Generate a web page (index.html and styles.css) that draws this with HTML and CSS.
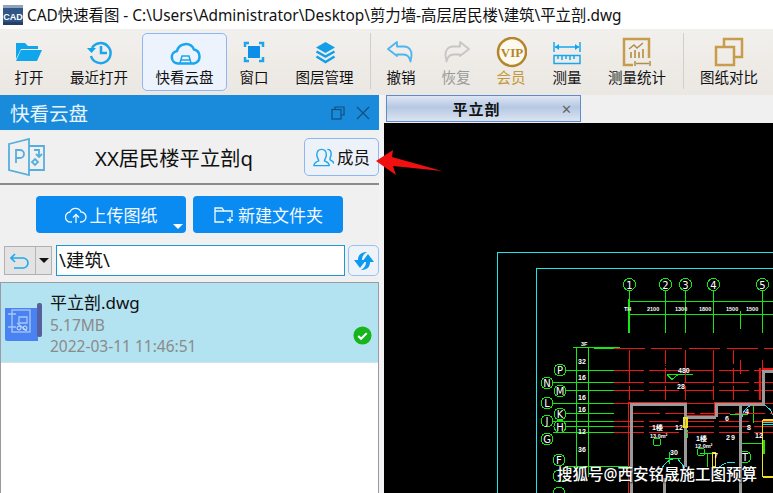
FILE: index.html
```html
<!DOCTYPE html>
<html lang="zh">
<head>
<meta charset="utf-8">
<title>CAD快速看图</title>
<link rel="stylesheet" href="styles.css">
</head>
<body>
<div class="app">
  <header class="titlebar">
    <svg class="app-logo" viewBox="0 0 22 22"><rect x="1" y="1" width="20" height="20" fill="#2f5686"/><rect x="1" y="1" width="20" height="3" fill="#8fa3bb"/><rect x="1" y="18" width="20" height="3" fill="#26405f"/><text x="11" y="16" class="logo-text">CAD</text></svg>
    <span class="title-text">CAD快速看图 - C:\Users\Administrator\Desktop\剪力墙-高层居民楼\建筑\平立剖.dwg</span>
  </header>

  <nav class="toolbar">
    <div class="tool w58">
      <svg class="tool-icon" viewBox="0 0 32 32"><path class="f-blue" d="M3 6h9l3 3h10v3H8l-5 10z"/><path class="f-blue" d="M8 13h21l-5 11H3z"/></svg>
      <span>打开</span>
    </div>
    <div class="tool w82">
      <svg class="tool-icon" viewBox="0 0 32 32"><path class="s-blue" d="M9 11a10 10 0 1 1-1 8"/><path class="f-blue" d="M4 11h9l-4.500 5z"/><path class="s-blue" d="M18 9v7h6"/></svg>
      <span>最近打开</span>
    </div>
    <div class="tool active">
      <svg class="tool-icon" viewBox="0 0 32 32"><path class="s-blue" d="M9 26.500a6.300 6.300 0 0 1-1-12.500a9 9 0 0 1 17-1.500a7.200 7.200 0 0 1 0 14z"/><path class="s-thin" d="M11 26l2-7h7l2 7M12 23h9"/></svg>
      <span>快看云盘</span>
    </div>
    <div class="tool w54">
      <svg class="tool-icon" viewBox="0 0 32 32"><path class="s-blue" d="M7 10V6h4M21 6h4v4M25 20v4h-4M11 24H7v-4"/><rect class="f-deep" x="10" y="9" width="12" height="12"/></svg>
      <span>窗口</span>
    </div>
    <div class="tool w87">
      <svg class="tool-icon" viewBox="0 0 32 32"><path class="f-layer" d="M16.500 5l9.500 5.500-9.500 5.500-9.500-5.500z"/><path class="s-layer" d="M7.500 14.500l9 5 9-5M7.500 19.500l9 5.500 9-5.500"/></svg>
      <span>图层管理</span>
    </div>
    <div class="sep"></div>
    <div class="tool w60">
      <svg class="tool-icon" viewBox="0 0 32 32"><path class="s-undo" d="M3 12l9-7v4.500h7c5 0 8 4 7.500 9l-1 6c-1-5-3-7-7-7h-6.500V19z"/></svg>
      <span>撤销</span>
    </div>
    <div class="tool w50 disabled">
      <svg class="tool-icon" viewBox="0 0 32 32"><path class="s-redo" d="M29 12l-9-7v4.500h-7c-5 0-8 4-7.500 9l1 6c1-5 3-7 7-7h6.500V19z"/></svg>
      <span>恢复</span>
    </div>
    <div class="tool w60 gold">
      <svg class="tool-icon" viewBox="0 0 32 32"><circle class="s-vip" cx="17" cy="15" r="14"/><text x="17" y="19.500" class="vip-text">VIP</text></svg>
      <span>会员</span>
    </div>
    <div class="tool w52">
      <svg class="tool-icon" viewBox="0 0 32 32"><path class="s-thin" d="M3 5v10M29 5v10M4 10h24"/><path class="f-blue" d="M4 10l4-3v6zM28 10l-4-3v6z"/><rect class="s-thin" x="3" y="18.500" width="26" height="8"/><path class="s-thin" d="M7 19v3M11 19v4M15 19v3M19 19v4M23 19v3"/></svg>
      <span>测量</span>
    </div>
    <div class="tool w88">
      <svg class="tool-icon" viewBox="0 0 32 32"><path class="s-gold" d="M12 28H3V2h25v19"/><path class="s-gold-thin" d="M8 12l5-4 3 3 6-5"/><path class="f-gold" d="M9 15h2v6H9zM13 13h2v8h-2zM17 15h2v6h-2zM21 12h2v9h-2z"/><path class="s-gold-thin" d="M14 24v5M29 24v5M15 26.500h13"/></svg>
      <span>测量统计</span>
    </div>
    <div class="sep gap2"></div>
    <div class="tool w90">
      <svg class="tool-icon" viewBox="0 0 32 32"><path class="s-gold" d="M11 10V2h18v18h-8"/><rect class="s-gold" x="3" y="10" width="18" height="18"/></svg>
      <span>图纸对比</span>
    </div>
  </nav>

  <main class="main">
    <aside class="panel">
      <div class="panel-head">
        <span class="panel-title">快看云盘</span>
        <svg class="head-icon" viewBox="0 0 14 14"><path class="s-dark" d="M4 3V1h9v8h-3"/><rect class="s-dark" x="1" y="3.500" width="9" height="9.500"/></svg>
        <svg class="head-icon close-icon" viewBox="0 0 14 14"><path class="s-dark" d="M1 1l12 12M13 1L1 13"/></svg>
      </div>

      <div class="project">
        <svg class="ppt-icon" viewBox="0 0 37 38"><path class="s-ppt" d="M1 6l20-5v36L1 32z"/><path class="s-ppt" d="M21 8h15v24H21"/><path class="s-ppt" d="M8 25V12h4a3.500 3.500 0 0 1 0 8H8"/><path class="s-ppt" d="M26 12h5v6M28 16l3 3 3-3"/><path class="s-ppt" d="M27 21l3 3-3 3-3-3z"/></svg>
        <span class="project-name">XX居民楼平立剖q</span>
        <button class="member">
          <svg class="member-icon" viewBox="0 0 22 20"><path class="s-member" d="M11 19H1c0-3 2-4 5-5 0-2-2-3-2-6 0-4 2-6 5-6 4 0 5 3 5 6 0 3-2 4-2 6 2 1 5 2 5 5z"/><path class="s-member" d="M15 2c3 0 4 3 4 5 0 3-2 4-1 6 2 1 4 2 4 4"/></svg>
          <span>成员</span>
        </button>
      </div>

      <div class="actions">
        <button class="primary">
          <svg class="btn-icon" viewBox="0 0 22 18"><path class="s-white" d="M7 16H6a5 5 0 0 1-1-10a6 6 0 0 1 11 0a5 5 0 0 1 0 10h-1"/><path class="s-white" d="M11 17V9M8 11.500L11 8.500l3 3"/></svg>
          <span>上传图纸</span>
          <i class="caret-white"></i>
        </button>
        <button class="primary">
          <svg class="btn-icon" viewBox="0 0 22 18"><path class="s-white" d="M11 16H2V2h7l2 3h8v6"/><path class="s-white" d="M2 5h9M17 11v6M14 14h6"/></svg>
          <span>新建文件夹</span>
        </button>
      </div>

      <div class="path-row">
        <div class="back">
          <span class="back-main"><svg class="back-icon" viewBox="0 0 20 16"><path class="s-back" d="M5 1L1 5l4 4M1 5h12a4.500 4.500 0 0 1 0 10H4"/></svg></span>
          <span class="back-more"><i class="caret-black"></i></span>
        </div>
        <div class="path-input">\建筑\</div>
        <button class="refresh">
          <svg class="refresh-icon" viewBox="0 0 24 24"><path class="f-refresh" d="M15 3c-5 0-9 2-9 8H2l6 8 6-8h-4c0-4 2-6 5-8z"/><path class="f-refresh" d="M9 21c5 0 9-2 9-8h4l-6-8-6 8h4c0 4-2 6-5 8z"/></svg>
        </button>
      </div>

      <div class="list">
        <div class="file selected">
          <svg class="file-icon" viewBox="0 0 38 38"><path class="f-plan" d="M0 5h33v33H2a2 2 0 0 1-2-2z"/><rect class="f-roll" x="32" y="0" width="5" height="34" rx="2"/><g class="plan-lines"><rect x="7" y="7" width="18" height="22"/><path d="M3 11h8M3 24h8M14 14h8v6h-8zM12 20l10 8"/></g><circle class="plan-dot" cx="14" cy="25" r="2"/><circle class="plan-dot" cx="20" cy="25" r="2"/></svg>
          <div class="file-meta">
            <div class="file-name">平立剖.dwg</div>
            <div class="file-sub">5.17MB</div>
            <div class="file-sub">2022-03-11 11:46:51</div>
          </div>
          <svg class="check" viewBox="0 0 20 20"><circle class="f-check" cx="10" cy="10" r="9.500"/><path class="s-check" d="M5.500 10.500l3 3 6-6"/></svg>
        </div>
      </div>
    </aside>

    <section class="viewer">
      <div class="tabs">
        <div class="tab"><span class="tab-name">平立剖</span><span class="tab-x">✕</span></div>
      </div>
      <div class="canvas">
        <svg class="drawing" viewBox="384 123 389 370">
          <g class="cyan">
            <path d="M497.500 493V252.500H773M536.500 493V268.500H773"/>
            <path d="M763 422h10M763 424h10"/>
            <path d="M715 476a16 16 0 0 1 20-13M742 417a16 16 0 0 1 31-2M685 468l-8-10a20 20 0 0 0-16 12"/>
          </g>
          <g class="green">
            <circle cx="629.500" cy="284.500" r="6"/><circle cx="665.500" cy="284.500" r="6"/><circle cx="685.500" cy="284.500" r="6"/><circle cx="713.500" cy="284.500" r="6"/><circle cx="762.500" cy="284.500" r="6"/>
            <path d="M629.500 290v43M665.500 290v43M685.500 290v43M713.500 290v43M740.500 311v18M762.500 290v43"/>
            <path d="M628 301.500h145M628 314.500h145"/>
            <path d="M573 347.500h47M576.500 347v130M588.500 347v130"/>
            <circle cx="560" cy="370" r="6"/><circle cx="547" cy="383" r="6"/><circle cx="560" cy="391" r="6"/><circle cx="547" cy="403" r="6"/><circle cx="560" cy="414" r="6"/><circle cx="547" cy="421" r="6"/><circle cx="560" cy="426.500" r="6"/><circle cx="547" cy="439" r="6"/><circle cx="559" cy="460" r="6"/><circle cx="559" cy="476" r="6"/><circle cx="559" cy="493" r="6"/>
            <path d="M566 370.500h48M553 382.500h61M566 390.500h48M553 403.500h61M566 413.500h48M553 421.500h61M566 426.500h48M553 432.500h61M565 466.500h65"/>
            <path d="M667 374.500h26M667 374.500l5 5 6-5M730 414.500h18M753 405v18M740 443h23M740 436v14M665 458h16M669 452v12M707 453v14M700 453h12"/>
            <circle cx="745" cy="457" r="6"/><circle cx="657" cy="442" r="4"/><circle cx="701" cy="452" r="4"/>
            <path d="M685 430v8M687 430v8"/>
          </g>
          <path class="green-thick" d="M616 348h-22M764 440v14M629 299v34"/>
          <g class="red">
            <path d="M614 348.500h31M651 348.500h31M689 348.500h31M727 348.500h31M764 348.500h9"/>
            <path d="M629.500 360v14M665.500 360v2M665.500 365v1M685.500 360v14M713.500 360v14M740.500 360v14M762.500 360v14"/>
            <path stroke-dasharray="30 5" d="M614 370.500h148M614 382.500h159M614 390.500h159M614 403.500h159M630 413.500h143M614 421.500h159M614 426.500h159M614 432.500h159"/>
            <path stroke-dasharray="14 4" d="M629.500 350v54M665.500 350v54M685.500 350v54M713.500 350v54M733.500 350v54"/>
          </g>
          <path class="red-thick" d="M628.500 493V402.500H686.500M684 415.500h30M714.500 416V402.500H762.500V369H773M760 400v-32"/>
          <g class="wall">
            <path d="M631.500 493V404.500H685.500V467M686 417.500h30M716.500 417V404.500H763.500V371H773M740.500 405V493M664 493V478"/>
          </g>
          <path class="yellow" d="M684 418h3v9h-3zM712.500 453v14h3v-14zM762.500 420v57M762.500 420h10M762.500 477h10"/>
          <g class="dim">
            <text x="624" y="311">TH</text><text x="647" y="311">2100</text><text x="675" y="311">1300</text><text x="699" y="311">1800</text><text x="726" y="311">1500</text><text x="746" y="311">1500</text>
            <text x="581" y="346">3F</text><text x="578" y="364" class="big">32</text><text x="578" y="380" class="big">16</text><text x="578" y="400" class="big">16</text><text x="578" y="412" class="big">16</text><text x="578" y="434" class="big">12</text><text x="578" y="452" class="big">36</text>
            <text x="652" y="430" class="big">1楼</text><text x="650" y="438">13.0m²</text><text x="696" y="441" class="big">1楼</text><text x="695" y="448">12.0m²</text>
            <text x="678" y="373" class="big">480</text><text x="677" y="389" class="big">28</text><text x="675" y="430" class="big">12</text><text x="670" y="455" class="big">30</text><text x="755" y="438" class="big">12</text>
            <text x="745" y="414" class="big">4</text><text x="725" y="421" class="big">6</text><text x="747" y="430" class="big">8</text><text x="714" y="458" class="big">7</text><text x="731" y="440" class="big">9</text><text x="726" y="440" class="big">2</text>
          </g>
          <g class="labels">
            <text x="629.500" y="288.500">1</text><text x="665.500" y="288.500">2</text><text x="685.500" y="288.500">3</text><text x="713.500" y="288.500">4</text><text x="762.500" y="288.500">5</text>
            <text x="560" y="374">P</text><text x="547" y="387">N</text><text x="560" y="395">M</text><text x="547" y="407">L</text><text x="560" y="418">K</text><text x="547" y="425">J</text><text x="560" y="430.500">H</text><text x="547" y="443">G</text><text x="559" y="464">F</text><text x="745" y="461">T</text>
          </g>
        </svg>
        <span class="watermark">搜狐号@西安铭晟施工图预算</span>
      </div>
    </section>
  </main>

  <svg class="arrow" viewBox="0 0 70 30"><path class="f-arrow" d="M1 12L18 1l-1 7 50 14-49-5 3 9z"/></svg>
</div>
</body>
</html>
```

FILE: styles.css
```css
* { box-sizing: border-box; }
html, body { margin: 0; padding: 0; height: 100%; overflow: hidden; background: #fff; }
body { font-family: "Noto Sans", "Noto Sans CJK SC", sans-serif; color: #111; }
button { font: inherit; margin: 0; padding: 0; }

.app { position: relative; width: 773px; height: 493px; display: flex; flex-direction: column; overflow: hidden; }

.titlebar { height: 29px; flex: none; display: flex; align-items: center; padding-left: 2px; gap: 3px; background: #fff; }
.app-logo { width: 22px; height: 22px; flex: none; }
.logo-text { font: bold 9px "Liberation Sans", sans-serif; fill: #fff; text-anchor: middle; }
.title-text { font-size: 15.400px; white-space: nowrap; color: #111; }

.toolbar { height: 66px; flex: none; display: flex; align-items: flex-start; padding-top: 4px; background: linear-gradient(#f2f0ed, #ebe7e2); }
.tool { height: 58px; flex: none; display: flex; flex-direction: column; align-items: center; padding-top: 4px; font-size: 14.500px; line-height: 17px; white-space: nowrap; }
.tool-icon { width: 32px; height: 32px; flex: none; }
.w50 { width: 50px; } .w52 { width: 52px; } .w54 { width: 54px; } .w58 { width: 58px; } .w60 { width: 60px; }
.w82 { width: 82px; margin-right: 2px; } .w87 { width: 87px; } .w88 { width: 88px; } .w90 { width: 90px; }
.active { width: 85px; background: #edf3fd; border: 1px solid #8db6f2; border-radius: 5px; padding-top: 3px; }
.disabled { color: #9a9a9a; }
.gold { color: #c4993d; }
.sep { width: 1px; height: 56px; margin: 0 0 0 2px; background: #d2cfca; flex: none; }

.f-blue { fill: #0fa6ee; }
.f-deep { fill: #0c8fe8; }
.f-layer { fill: #129fe8; }
.s-layer { fill: none; stroke: #129fe8; stroke-width: 2.500; }
.s-blue { fill: none; stroke: #1aa6ee; stroke-width: 2.500; }
.s-thin { fill: none; stroke: #1aa6ee; stroke-width: 1.500; }
.s-undo { fill: none; stroke: #4db6ee; stroke-width: 1.800; stroke-linejoin: round; }
.s-redo { fill: none; stroke: #c6c6c6; stroke-width: 1.800; stroke-linejoin: round; }
.s-vip { fill: #fdf9ee; stroke: #b4862c; stroke-width: 2.500; }
.vip-text { font: bold 13px "Liberation Serif", serif; fill: #b4862c; text-anchor: middle; }
.s-gold { fill: none; stroke: #c79c4c; stroke-width: 2.500; }
.s-gold-thin { fill: none; stroke: #b18d45; stroke-width: 1.500; }
.f-gold { fill: #c2a160; }

.main { flex: 1; display: flex; min-height: 0; background: #f3f3f3; }

.panel { width: 379px; flex: none; display: flex; flex-direction: column; background: #f0f0f0; }
.panel-head { height: 35px; flex: none; display: flex; align-items: center; padding: 0 9px 0 10px; background: #1a8bdb; }
.panel-title { font-size: 19.500px; color: #e8f4fd; margin-right: auto; }
.head-icon { width: 14px; height: 14px; }
.close-icon { margin-left: 11px; }
.s-dark { fill: none; stroke: #0f4f80; stroke-width: 1.200; }

.project { height: 55px; flex: none; display: flex; align-items: center; padding-left: 8px; border-bottom: 2px solid #8a8a8a; }
.ppt-icon { width: 37px; height: 38px; flex: none; }
.s-ppt { fill: none; stroke: #55aedd; stroke-width: 1.800; }
.project-name { margin-left: 50px; font-size: 20.300px; color: #111; white-space: nowrap; }
.member { margin-left: auto; width: 75px; height: 38px; display: flex; align-items: center; justify-content: center; gap: 3px; background: #edf2f9; border: 1px solid #8db6f2; border-radius: 5px; font-size: 16.500px; color: #111; }
.member-icon { width: 21px; height: 20px; }
.s-member { fill: none; stroke: #1fa4ee; stroke-width: 1.500; }

.actions { flex: none; display: flex; gap: 7px; padding: 11px 0 0 36px; }
.primary { position: relative; width: 150px; height: 37px; display: flex; align-items: center; justify-content: center; gap: 3px; background: #0a8bf2; border: 0; border-radius: 4px; color: #f4faff; font-size: 17px; }
.btn-icon { width: 22px; height: 18px; }
.s-white { fill: none; stroke: #f4faff; stroke-width: 1.300; }
.caret-white { position: absolute; right: 3px; bottom: 4px; width: 0; height: 0; border: 5px solid transparent; border-top: 5px solid #fff; border-bottom: 0; }

.path-row { flex: none; display: flex; align-items: center; margin-top: 12px; height: 31px; padding-left: 4px; }
.back { width: 48px; height: 29px; display: flex; border: 1px solid #b0b0b0; background: #e3e3e3; }
.back-main { flex: 1; display: flex; align-items: center; justify-content: center; border-right: 1px solid #b5b5b5; }
.back-more { width: 15px; display: flex; align-items: center; justify-content: center; }
.back-icon { width: 20px; height: 16px; }
.s-back { fill: none; stroke: #1fa8ee; stroke-width: 1.600; }
.caret-black { width: 0; height: 0; border: 5px solid transparent; border-top: 5px solid #111; border-bottom: 0; }
.path-input { width: 289px; height: 31px; margin-left: 4px; padding-left: 2px; background: #fff; border: 1px solid #1a98d8; font-size: 18.500px; line-height: 28px; color: #111; }
.refresh { width: 31px; height: 31px; margin-left: 3px; display: flex; align-items: center; justify-content: center; background: #eef3fa; border: 1px solid #9cc0f0; border-radius: 5px; }
.refresh-icon { width: 24px; height: 24px; }
.f-refresh { fill: #0c9bf0; }

.list { flex: 1; min-height: 0; margin-top: 6px; background: #fff; border: 1px solid #9a9aa4; border-bottom: 0; }
.file { height: 80px; display: flex; align-items: flex-start; border-bottom: 1px solid #d5e3e8; }
.selected { background: #b3e2f0; }
.file-icon { width: 38px; height: 38px; flex: none; margin: 20px 7px 0 4px; }
.f-plan { fill: #4a82f2; }
.f-roll { fill: #56609e; }
.plan-lines { fill: none; stroke: #a8c8f8; stroke-width: 1.300; }
.plan-dot { fill: none; stroke: #d0e4ff; stroke-width: 1; }
.file-meta { flex: 1; padding-top: 7px; }
.file-name { font-size: 17px; line-height: 25px; color: #111; }
.file-sub { font-size: 15.500px; line-height: 21px; color: #8a8a8a; }
.check { width: 19px; height: 19px; margin: 43px 6px 0 0; flex: none; }
.f-check { fill: #17b51c; }
.s-check { fill: none; stroke: #fff; stroke-width: 2.200; }

.viewer { flex: 1; min-width: 0; display: flex; flex-direction: column; margin-left: 5px; }
.tabs { height: 28px; flex: none; padding-left: 2px; background: #f0f0f0; }
.tab { position: relative; width: 195px; height: 27px; display: flex; align-items: center; justify-content: center; padding-right: 14px; background: linear-gradient(#dde6f3, #b6c8e2 45%, #dbe4f1); border: 1px solid #5f8cc8; }
.tab-name { font-size: 15px; font-weight: 700; letter-spacing: 1px; color: #111; }
.tab-x { position: absolute; right: 8px; top: 4px; font-size: 13px; color: #666; }

.canvas { position: relative; flex: 1; min-height: 0; background: #000; overflow: hidden; }
.drawing { display: block; width: 389px; height: 370px; shape-rendering: crispEdges; }
.cyan { fill: none; stroke: #1fe4e8; stroke-width: 1; }
.green { fill: none; stroke: #16e816; stroke-width: 1; }
.green-thick { fill: none; stroke: #16e816; stroke-width: 2; }
.red { fill: none; stroke: #ee1515; stroke-width: 1; }
.red-thick { fill: none; stroke: #ee1515; stroke-width: 1.800; }
.wall { fill: none; stroke: #9a9a9a; stroke-width: 3; }
.yellow { fill: none; stroke: #f0e020; stroke-width: 1.500; }
.dim { font: bold 5.500px "Liberation Sans", sans-serif; fill: #fff; }
.dim .big { font-size: 7px; }
.labels { font: 10px "DejaVu Sans", sans-serif; fill: #fff; text-anchor: middle; }
.watermark { position: absolute; left: 173px; top: 342px; font-size: 15.500px; line-height: 18px; font-weight: 500; color: #fff; white-space: nowrap; text-shadow: 1px 1px 2px #000; }

.arrow { position: absolute; left: 375px; top: 149px; width: 70px; height: 30px; }
.f-arrow { fill: #f01010; }
```
